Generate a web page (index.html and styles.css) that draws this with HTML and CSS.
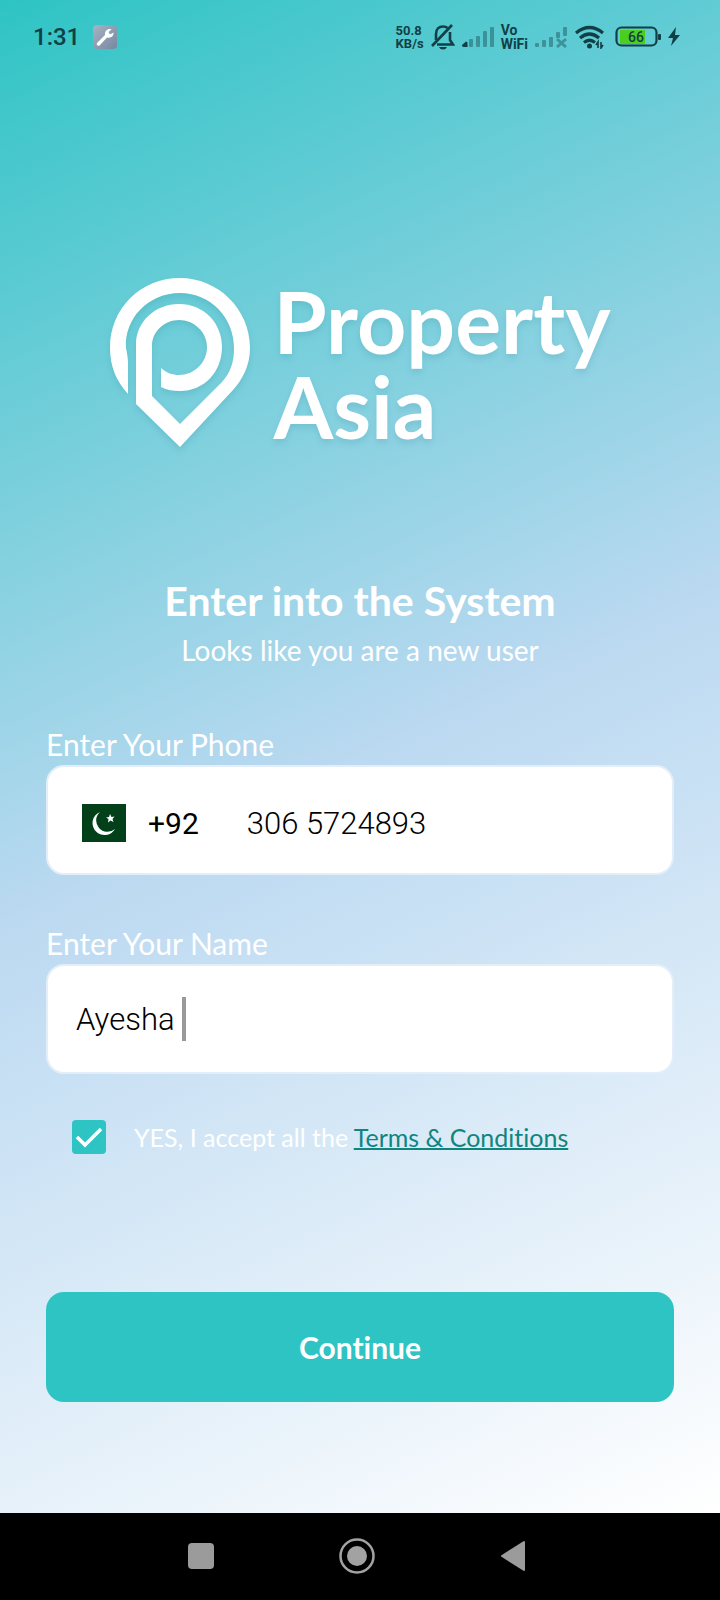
FILE: index.html
```html
<!DOCTYPE html>
<html lang="en">
<head>
<meta charset="utf-8">
<meta name="viewport" content="width=device-width, initial-scale=1">
<title>Property Asia</title>
<link rel="stylesheet" href="styles.css">
</head>
<body>
<div class="screen">
  <header class="status">
    <div class="status-left">
      <time class="clock">1:31</time>
      <svg class="tool" viewBox="0 0 24 24" width="24" height="24" aria-hidden="true">
        <defs><linearGradient id="tile" x1="0" y1="0" x2="1" y2="1"><stop offset="0" stop-color="#a6b4c2"/><stop offset="1" stop-color="#77879f"/></linearGradient></defs>
        <rect width="24" height="24" rx="4" fill="url(#tile)"/>
        <path d="M4 18 L12 10 C11.500 6 15 3 18.500 4.500 L15.500 7 L17 9.500 L20.500 7.500 C21 11 18 13.500 14 12.500 L6.500 20.500 C5 21.500 3 20 4 18Z" fill="#fff"/>
      </svg>
    </div>
    <div class="status-right">
      <div class="mini"><span>50.8</span><span>KB/s</span></div>
      <svg width="24" height="28" viewBox="0 0 24 28" fill="none" stroke="#123f45" stroke-width="2.600" aria-hidden="true">
        <path d="M5 17 V11 C5 6 8 3.500 12 3.500 C14 3.500 15.500 4 16.500 5"/>
        <path d="M19 9 V17 L22 21.500 H6"/>
        <path d="M1 23 L21 2"/>
        <path d="M8 24 H16 Q15 26.500 12 26.500 T8 24Z" fill="#123f45" stroke="none"/>
      </svg>
      <svg width="32" height="22" viewBox="0 0 32 22" fill="#123f45" aria-hidden="true">
        <path d="M0 19 L4 15.500 Q5.500 15.500 5.500 17 V21 H1 Q0 20.500 0 19Z"/>
        <g opacity=".4"><rect x="7" y="13" width="4" height="8" rx="1"/><rect x="14" y="10" width="4" height="11" rx="1"/><rect x="21" y="5" width="4" height="16" rx="1"/><rect x="28" y="1" width="4" height="20" rx="1"/></g>
      </svg>
      <div class="mini vowifi"><span>Vo</span><span>WiFi</span></div>
      <svg width="32" height="22" viewBox="0 0 32 22" fill="#123f45" opacity=".4" aria-hidden="true">
        <rect x="0" y="17" width="4" height="4" rx="1"/><rect x="7" y="14" width="4" height="7" rx="1"/><rect x="14" y="11" width="4" height="10" rx="1"/><rect x="21" y="6" width="4" height="6" rx="1"/><rect x="28" y="1" width="4" height="9" rx="1"/>
        <path d="M22 13 L31 21 M31 13 L22 21" stroke="#123f45" stroke-width="3"/>
      </svg>
      <svg width="32" height="24" viewBox="0 0 32 24" fill="none" stroke="#123f45" stroke-width="3.200" aria-hidden="true">
        <path d="M2 8 Q15.500 -3 29 8"/><path d="M6 13 Q15.500 5 25 13"/><path d="M10 17.500 Q15.500 13 21 17.500"/>
        <circle cx="15.500" cy="21" r="2.500" fill="#123f45" stroke="none"/>
        <path d="M24 23 V17 L22 20 M27 17 V23 L29 20" stroke-width="1.600"/>
      </svg>
      <svg class="battery" width="46" height="22" viewBox="0 0 46 22" role="img" aria-label="Battery 66">
        <rect x="5" y="4" width="25" height="14" fill="#4bcf1f"/>
        <rect x="1.500" y="1.500" width="40" height="18" rx="5" fill="none" stroke="#123f45" stroke-width="2.200"/>
        <rect x="43" y="8" width="3" height="6" rx="1" fill="#123f45"/>
        <text x="21" y="16" text-anchor="middle" class="level">66</text>
      </svg>
      <svg class="bolt" width="12" height="20" viewBox="0 0 12 20" aria-hidden="true"><path d="M8 0 L0 11 H5 L3 19 L12 8 H7Z" fill="#123f45"/></svg>
    </div>
  </header>

  <main class="content">
    <div class="brand">
      <svg class="pin" width="140" height="172" viewBox="0 0 140 172" fill="#fff" aria-hidden="true">
        <path d="M18 116 C6 103 0 88 0 70 C0 30 31 0 70 0 C108 0 140 31 140 70 C140 87 133 101 123 112 L70 169 L26 126 V66 C26 44 45 26 69 26 C94 26 112 45 112 69 C112 94 94 113 70 113 C63 113 57 112 51 109 V90 C57 95 62 97 69 97 C84 97 97 85 97 69 C97 54 84 42 69 42 C55 42 42 53 42 68 V118 L70 146 L112 104 C120 95 124 85 124 70 C124 40 101 15 70 15 C38 15 14 41 16 70 C17 75 18 80 18 86Z"/>
      </svg>
      <h1 class="brand-name">Property<br>Asia</h1>
    </div>

    <section class="intro">
      <h2 class="title">Enter into the System</h2>
      <p class="subtitle">Looks like you are a new user</p>
    </section>

    <form class="form">
      <div class="group">
        <label class="label" for="phone">Enter Your Phone</label>
        <div class="field phone-field">
          <svg class="flag" width="44" height="38" viewBox="0 0 44 38" role="img" aria-label="Pakistan">
            <rect width="44" height="38" fill="#02401a"/>
            <path d="M18 8 A12 12 0 1 0 33 25 A10.500 10.500 0 0 1 18 8Z" fill="#fff"/>
            <path d="M28 10 L29.500 13 L32.500 12.500 L30.500 15 L31.500 18 L28.500 16.500 L26 18.500 L26.500 15 L24 13.500 L27 13Z" fill="#fff"/>
          </svg>
          <span class="code">+92</span>
          <input class="input" id="phone" type="tel" value="306 5724893">
        </div>
      </div>
      <div class="group">
        <label class="label" for="name">Enter Your Name</label>
        <div class="field">
          <input class="input name-input" id="name" type="text" value="Ayesha ">
          <span class="caret"></span>
        </div>
      </div>
      <div class="terms">
        <span class="check">
          <input class="box" id="accept" type="checkbox" checked>
          <svg class="tick" width="34" height="34" viewBox="0 0 34 34" aria-hidden="true"><path d="M5 17 L13 25 L29 9" fill="none" stroke="#fff" stroke-width="3.500"/></svg>
        </span>
        <span class="terms-text"><label for="accept">YES, I accept all the </label><a class="link" href="#">Terms &amp; Conditions</a></span>
      </div>
      <button class="continue" type="button">Continue</button>
    </form>
  </main>
</div>

<nav class="navbar">
  <button class="nav-button" type="button" aria-label="Recent apps"><svg width="40" height="40" viewBox="0 0 40 40"><rect x="7" y="7" width="26" height="26" rx="4" fill="#9b9b9b"/></svg></button>
  <button class="nav-button" type="button" aria-label="Home"><svg width="40" height="40" viewBox="0 0 40 40"><circle cx="20" cy="20" r="16.500" fill="none" stroke="#a2a2a2" stroke-width="2.500"/><circle cx="20" cy="20" r="10" fill="#a2a2a2"/></svg></button>
  <button class="nav-button" type="button" aria-label="Back"><svg width="40" height="40" viewBox="0 0 40 40"><path d="M9 20 L31 6 V34Z" fill="#9b9b9b" stroke="#9b9b9b" stroke-width="2" stroke-linejoin="round"/></svg></button>
</nav>
</body>
</html>
```

FILE: styles.css
```css
* { box-sizing: border-box; }

body {
  margin: 0;
  min-height: 100vh;
  display: flex;
  flex-direction: column;
  font-family: Lato, "Liberation Sans", sans-serif;
  font-variant-ligatures: none;
  color: #fff;
}

.screen {
  flex: 1;
  background: linear-gradient(155deg, #2ec4c4 0%, #bbd9f1 50%, #fff 100%);
}

.status {
  display: flex;
  justify-content: space-between;
  align-items: center;
  height: 74px;
  padding: 0 40px 0 33px;
  font-family: Roboto, sans-serif;
  color: #123f45;
}

.status-left { display: flex; align-items: center; gap: 13px; }
.status-right { display: flex; align-items: center; gap: 7px; }
.clock { font-size: 24px; font-weight: 500; }

.mini {
  display: flex;
  flex-direction: column;
  font-size: 13px;
  line-height: 13px;
  font-weight: 700;
}

.vowifi { font-size: 14px; line-height: 14px; }
.level { font: 500 14px Roboto, sans-serif; fill: #123f45; }
.battery { margin-left: 2px; }

.content { padding: 204px 46px 110px; }

.brand { display: flex; justify-content: center; gap: 24px; }
.pin, .brand-name { filter: drop-shadow(0 4px 3px rgb(40 130 150 / 18%)); }
.pin { flex: none; }

.brand-name {
  margin: 0;
  font-size: 86px;
  line-height: 85px;
  font-weight: 700;
}

.intro { margin-top: 124px; text-align: center; }
.title { margin: 0; font-size: 41px; line-height: 54px; font-weight: 700; }
.subtitle { margin: 0; font-size: 28px; line-height: 44px; }

.form { margin-top: 54px; }
.group { margin-bottom: 50px; }
.label { display: block; font-size: 30px; line-height: 36px; }

.field {
  display: flex;
  align-items: center;
  height: 110px;
  margin-top: 3px;
  padding: 0 28px;
  border: 2px solid #e3eef9;
  border-radius: 18px;
  background: #fff;
  color: #000;
  font-family: Roboto, sans-serif;
}

.phone-field { padding: 6px 34px 0; }
.flag { flex: none; }
.code { margin-left: 22px; font-size: 30px; }

.input {
  flex: 1;
  min-width: 0;
  padding: 0;
  border: 0;
  outline: 0;
  background: none;
  color: #000;
  font: 300 31px Roboto, sans-serif;
}

.phone-field .input { margin-left: 48px; }
.name-input { flex: none; field-sizing: content; }
.caret { width: 4px; height: 44px; background: #999; }

.terms { display: flex; align-items: center; gap: 28px; margin: -4px 26px 0; }
.check { display: grid; }
.box, .tick { grid-area: 1 / 1; }

.box {
  appearance: none;
  width: 34px;
  height: 34px;
  margin: 0;
  border-radius: 4px;
  background: #2ec4c4;
}

.tick { pointer-events: none; visibility: hidden; }
.box:checked + .tick { visibility: visible; }
.terms-text { font-size: 25px; line-height: 34px; }
.link { color: #108580; text-decoration-thickness: 2px; text-underline-offset: 1px; text-decoration-skip-ink: none; }

.continue {
  display: block;
  width: 100%;
  height: 110px;
  margin-top: 138px;
  border: 0;
  border-radius: 18px;
  background: #2ec4c4;
  color: #fff;
  font: 700 30px Lato, sans-serif;
  font-variant-ligatures: none;
}

.navbar {
  display: flex;
  justify-content: center;
  align-items: center;
  gap: 116px;
  height: 87px;
  padding: 0 6px 2px 0;
  background: #000;
}

.nav-button { display: flex; padding: 0; border: 0; background: none; }
```
